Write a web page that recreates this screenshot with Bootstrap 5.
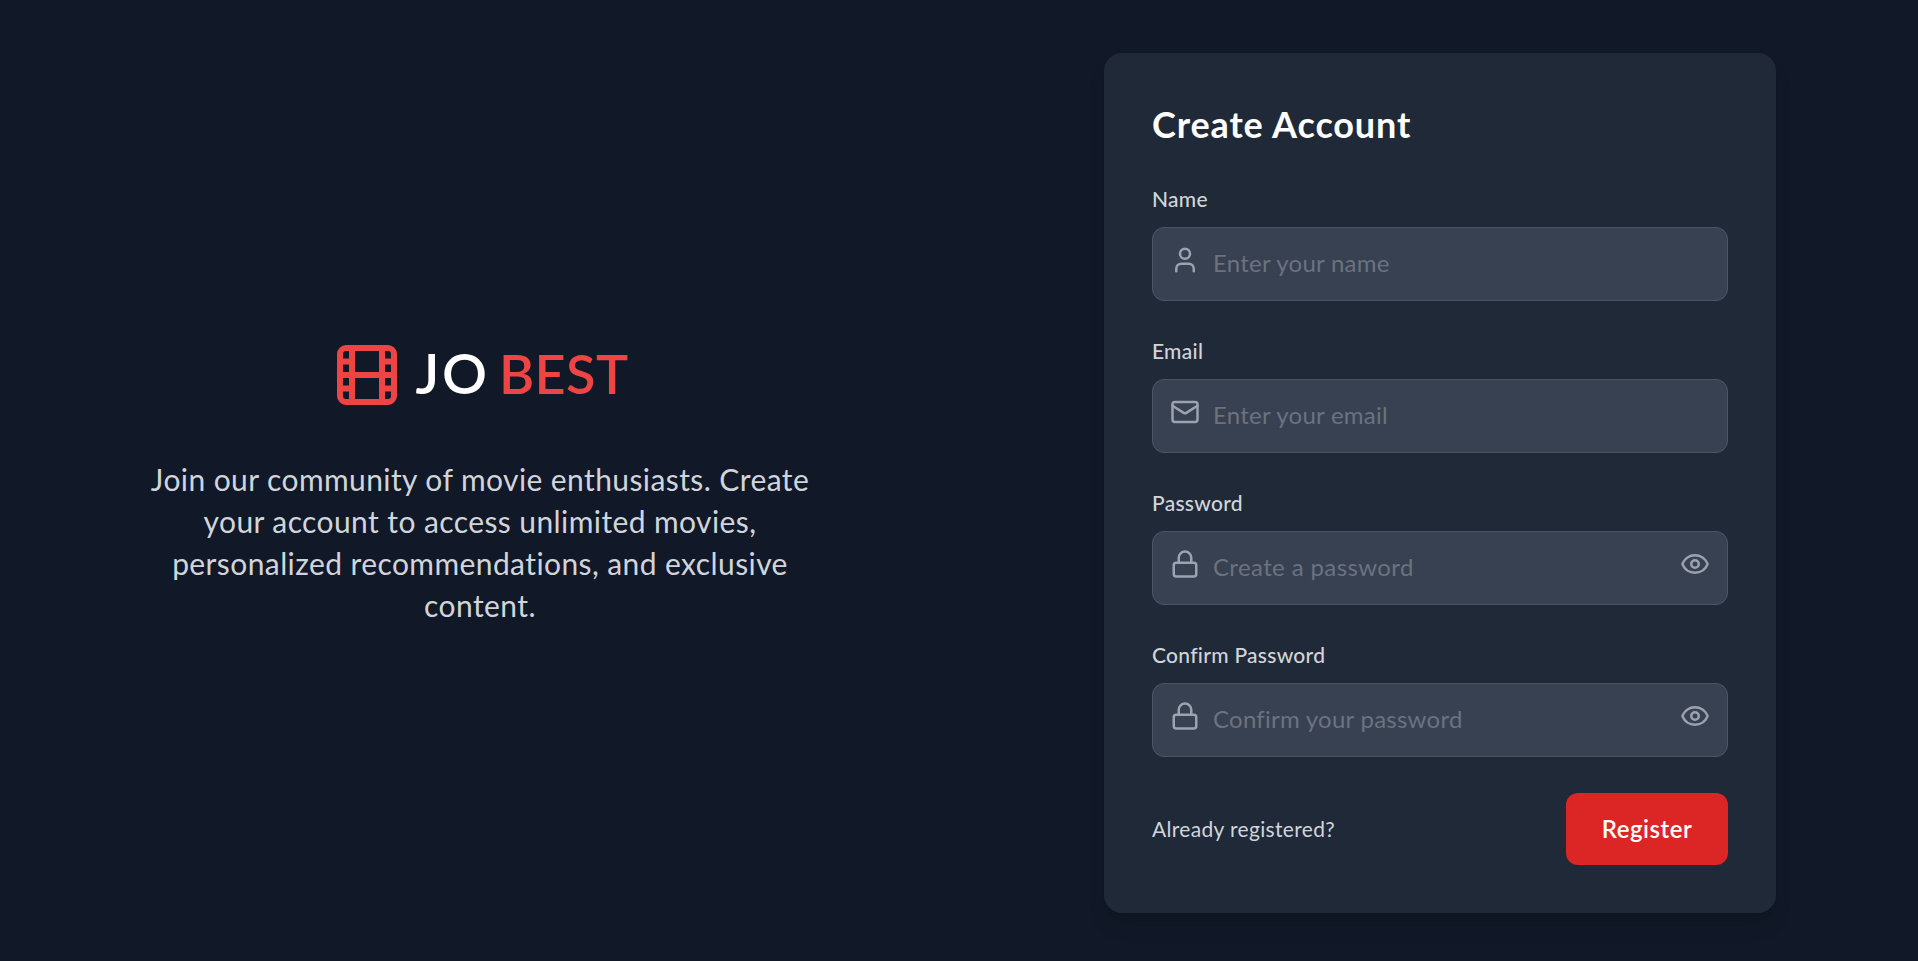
<!DOCTYPE html>
<html lang="en">
<head>
<meta charset="utf-8">
<meta name="viewport" content="width=device-width, initial-scale=1">
<title>Create Account</title>
<link href="https://cdn.jsdelivr.net/npm/bootstrap@5.3.0/dist/css/bootstrap.min.css" rel="stylesheet">
<style>
body { background: #111827; color: #fff; font-family: Lato, "Open Sans", sans-serif; overflow: hidden; }
.page-wrap { height: 961px; padding-top: 53px; }
.half { width: 959.5px; }
.intro { width: 672px; height: 860px; margin-left: 144px; }
.brand { gap: 12px; height: 72px; margin-bottom: 47px; }
.brand-name { font-size: 54px; font-weight: 600; line-height: 60px; padding-bottom: 3px; }
.brand-jo { font-size: 56px; letter-spacing: 2.6px; margin-right: 9.4px; }
.brand-best { color: #ef4444; letter-spacing: .4px; }
.film { color: #ef4444; }
.tagline { font-size: 30px; line-height: 42px; color: #d1d5db; letter-spacing: .41px; padding-bottom: 1px; white-space: nowrap; }
.panel { width: 672px; height: 860px; margin-left: 144.5px; padding: 48px; border-radius: 18px; background: #1f2937;
  box-shadow: 0 15px 22.5px -4.5px rgba(0,0,0,.1), 0 6px 9px -6px rgba(0,0,0,.1); }
.panel-title { font-size: 36px; font-weight: 700; line-height: 46px; padding-bottom: 2px; margin-bottom: 36px; letter-spacing: .88px; }
.field { margin-bottom: 36px; }
.field-label { display: block; font-size: 21px; line-height: 28px; padding-bottom: 2px; margin-bottom: 12px; font-weight: 500; color: #d1d5db; letter-spacing: .28px; }
.field-input.form-control { height: 74px; padding: 16px 60px 20px; border: 1px solid #4b5563; border-radius: 12px; background: #374151; color: #fff; font-size: 24px; line-height: 36px; letter-spacing: .25px; }
.field-input.form-control::placeholder { color: #6b7280; opacity: 1; }
.wide-track.form-control { letter-spacing: .38px; }
.ico { fill: none; stroke: currentColor; stroke-width: 2; stroke-linecap: round; stroke-linejoin: round; display: block; flex: none; }
.ico-lead, .ico-eye { position: absolute; top: 18px; width: 30px; height: 30px; padding: 0; border: 0; background: none; color: #9ca3af; }
.ico-lead { left: 18px; }
.ico-eye { right: 18px; }
.actions { height: 72px; }
.login-link { font-size: 21px; line-height: 30px; color: #d1d5db; letter-spacing: .33px; }
.submit.btn { width: 162px; height: 72px; border: 0; border-radius: 12px; padding: 0; background: #dc2626; color: #fff; font-size: 24px; font-weight: 600; letter-spacing: .5px; }
</style>
</head>
<body>
<main class="page-wrap d-flex align-items-start">
  <section class="half flex-shrink-0">
    <div class="intro d-flex flex-column justify-content-center text-center">
      <div class="brand d-flex align-items-center justify-content-center">
        <svg class="ico film" width="72" height="72" viewBox="0 0 24 24"><rect x="3" y="3" width="18" height="18" rx="2"/><path d="M7 3v18M3 7.5h4M3 12h18M3 16.5h4M17 3v18M17 7.5h4M17 16.5h4"/></svg>
        <div class="brand-name d-flex align-items-baseline"><span class="brand-jo">JO</span><span class="brand-best">BEST</span></div>
      </div>
      <p class="tagline mb-0">Join our community of movie enthusiasts. Create<br>your account to access unlimited movies,<br>personalized recommendations, and exclusive<br>content.</p>
    </div>
  </section>
  <section class="half flex-shrink-0">
    <form class="panel" onsubmit="return false">
      <h1 class="panel-title mt-0">Create Account</h1>
      <div class="field">
        <label class="field-label" for="name">Name</label>
        <div class="position-relative">
          <input class="form-control field-input" id="name" type="text" placeholder="Enter your name">
          <svg class="ico ico-lead" viewBox="0 0 24 24"><path d="M19 21v-2a4 4 0 0 0-4-4H9a4 4 0 0 0-4 4v2"/><circle cx="12" cy="7" r="4"/></svg>
        </div>
      </div>
      <div class="field">
        <label class="field-label" for="email">Email</label>
        <div class="position-relative">
          <input class="form-control field-input" id="email" type="email" placeholder="Enter your email">
          <svg class="ico ico-lead" viewBox="0 0 24 24"><rect x="2" y="4" width="20" height="16" rx="2"/><path d="m22 7-8.97 5.7a1.94 1.94 0 0 1-2.06 0L2 7"/></svg>
        </div>
      </div>
      <div class="field">
        <label class="field-label" for="password">Password</label>
        <div class="position-relative">
          <input class="form-control field-input wide-track" id="password" type="password" placeholder="Create a password">
          <svg class="ico ico-lead" viewBox="0 0 24 24"><rect x="3" y="11" width="18" height="11" rx="2"/><path d="M7 11V7a5 5 0 0 1 10 0v4"/></svg>
          <button class="ico-eye" type="button" aria-label="Show password"><svg class="ico" width="30" height="30" viewBox="0 0 24 24"><path d="M2.062 12.348a1 1 0 0 1 0-.696 10.75 10.75 0 0 1 19.876 0 1 1 0 0 1 0 .696 10.75 10.75 0 0 1-19.876 0"/><circle cx="12" cy="12" r="3"/></svg></button>
        </div>
      </div>
      <div class="field">
        <label class="field-label" for="confirm">Confirm Password</label>
        <div class="position-relative">
          <input class="form-control field-input" id="confirm" type="password" placeholder="Confirm your password">
          <svg class="ico ico-lead" viewBox="0 0 24 24"><rect x="3" y="11" width="18" height="11" rx="2"/><path d="M7 11V7a5 5 0 0 1 10 0v4"/></svg>
          <button class="ico-eye" type="button" aria-label="Show password"><svg class="ico" width="30" height="30" viewBox="0 0 24 24"><path d="M2.062 12.348a1 1 0 0 1 0-.696 10.75 10.75 0 0 1 19.876 0 1 1 0 0 1 0 .696 10.75 10.75 0 0 1-19.876 0"/><circle cx="12" cy="12" r="3"/></svg></button>
        </div>
      </div>
      <div class="actions d-flex align-items-center justify-content-between">
        <a class="login-link text-decoration-none" href="#">Already registered?</a>
        <button class="btn submit" type="submit">Register</button>
      </div>
    </form>
  </section>
</main>
<script src="https://cdn.jsdelivr.net/npm/bootstrap@5.3.0/dist/js/bootstrap.bundle.min.js"></script>
</body>
</html>
